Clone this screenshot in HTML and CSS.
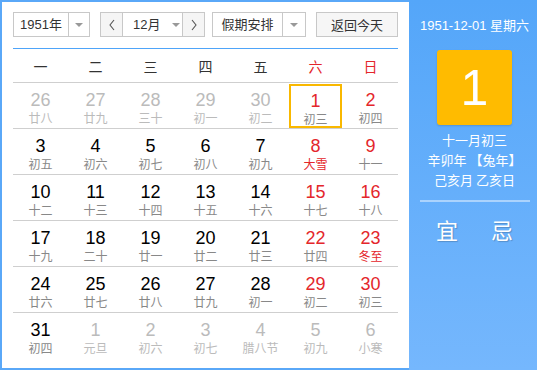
FILE: index.html
```html
<!DOCTYPE html>
<html>
<head>
<meta charset="utf-8">
<link rel="stylesheet" href="styles.css">
</head>
<body>
<div class="cal">
  <div class="main">
    <div class="toolbar">
      <div class="sel sel-year"><span class="sel-text">1951年</span><span class="sel-arrow"><i class="tri"></i></span></div>
      <div class="sel sel-month">
        <span class="nav"><svg width="8" height="12" viewBox="0 0 8 12"><path d="M6 1 L2 6 L6 11" fill="none" stroke="#555" stroke-width="1.1"/></svg></span>
        <span class="sel-text month-text"><span>12月</span><i class="tri"></i></span>
        <span class="nav"><svg width="8" height="12" viewBox="0 0 8 12"><path d="M2 1 L6 6 L2 11" fill="none" stroke="#555" stroke-width="1.1"/></svg></span>
      </div>
      <div class="sel sel-hol"><span class="sel-text">假期安排</span><span class="sel-arrow"><i class="tri"></i></span></div>
      <div class="btn-today">返回今天</div>
    </div>
    <div class="weekhead">
      <span>一</span><span>二</span><span>三</span><span>四</span><span>五</span><span class="red">六</span><span class="red">日</span>
    </div>
    <div class="grid">
      <div class="row">
        <div class="cell other"><b>26</b><em>廿八</em></div>
        <div class="cell other"><b>27</b><em>廿九</em></div>
        <div class="cell other"><b>28</b><em>三十</em></div>
        <div class="cell other"><b>29</b><em>初一</em></div>
        <div class="cell other"><b>30</b><em>初二</em></div>
        <div class="cell wkd sel-day"><b>1</b><em>初三</em></div>
        <div class="cell wkd"><b>2</b><em>初四</em></div>
      </div>
      <div class="row">
        <div class="cell"><b>3</b><em>初五</em></div>
        <div class="cell"><b>4</b><em>初六</em></div>
        <div class="cell"><b>5</b><em>初七</em></div>
        <div class="cell"><b>6</b><em>初八</em></div>
        <div class="cell"><b>7</b><em>初九</em></div>
        <div class="cell wkd"><b>8</b><em class="term">大雪</em></div>
        <div class="cell wkd"><b>9</b><em>十一</em></div>
      </div>
      <div class="row">
        <div class="cell"><b>10</b><em>十二</em></div>
        <div class="cell"><b>11</b><em>十三</em></div>
        <div class="cell"><b>12</b><em>十四</em></div>
        <div class="cell"><b>13</b><em>十五</em></div>
        <div class="cell"><b>14</b><em>十六</em></div>
        <div class="cell wkd"><b>15</b><em>十七</em></div>
        <div class="cell wkd"><b>16</b><em>十八</em></div>
      </div>
      <div class="row">
        <div class="cell"><b>17</b><em>十九</em></div>
        <div class="cell"><b>18</b><em>二十</em></div>
        <div class="cell"><b>19</b><em>廿一</em></div>
        <div class="cell"><b>20</b><em>廿二</em></div>
        <div class="cell"><b>21</b><em>廿三</em></div>
        <div class="cell wkd"><b>22</b><em>廿四</em></div>
        <div class="cell wkd"><b>23</b><em class="term">冬至</em></div>
      </div>
      <div class="row">
        <div class="cell"><b>24</b><em>廿六</em></div>
        <div class="cell"><b>25</b><em>廿七</em></div>
        <div class="cell"><b>26</b><em>廿八</em></div>
        <div class="cell"><b>27</b><em>廿九</em></div>
        <div class="cell"><b>28</b><em>初一</em></div>
        <div class="cell wkd"><b>29</b><em>初二</em></div>
        <div class="cell wkd"><b>30</b><em>初三</em></div>
      </div>
      <div class="row last">
        <div class="cell"><b>31</b><em>初四</em></div>
        <div class="cell other"><b>1</b><em>元旦</em></div>
        <div class="cell other"><b>2</b><em>初六</em></div>
        <div class="cell other"><b>3</b><em>初七</em></div>
        <div class="cell other"><b>4</b><em>腊八节</em></div>
        <div class="cell other"><b>5</b><em>初九</em></div>
        <div class="cell other"><b>6</b><em>小寒</em></div>
      </div>
    </div>
  </div>
  <div class="side">
    <div class="side-date">1951-12-01 星期六</div>
    <div class="bigday">1</div>
    <div class="lunar">十一月初三</div>
    <div class="lunar">辛卯年 【兔年】</div>
    <div class="lunar">己亥月 乙亥日</div>
    <div class="divider"></div>
    <div class="yiji"><span>宜</span><span>忌</span></div>
  </div>
</div>
</body>
</html>
```
FILE: styles.css
```css
* { box-sizing: border-box; }
html, body { margin: 0; padding: 0; }
body {
  font-family: "Liberation Sans", "Noto Sans CJK SC", sans-serif;
  width: 537px;
  height: 370px;
  overflow: hidden;
}
.cal {
  display: flex;
  width: 537px;
  height: 370px;
}
.main {
  width: 409px;
  height: 370px;
  background: #fff;
  border: 2px solid #5aa8f8;
  border-right: none;
  padding: 10px 11px 0 11px;
}
.toolbar {
  display: flex;
  height: 25px;
  font-size: 13px;
  color: #333;
  white-space: nowrap;
}
.sel {
  display: flex;
  border: 1px solid #c8c8c8;
  background: #fff;
  height: 25px;
}
.sel-year { width: 77px; }
.sel-year .sel-text { width: 54px; }
.sel-month { width: 105px; margin-left: 10px; }
.sel-hol { width: 94px; margin-left: 7px; }
.sel-hol .sel-text { width: 69px; }
.sel-text {
  display: flex;
  align-items: center;
  justify-content: center;
  height: 23px;
  line-height: 23px;
  font-family: "Liberation Sans", "Noto Sans CJK SC", sans-serif;
}
.sel-arrow {
  flex: 1;
  border-left: 1px solid #c8c8c8;
  display: flex;
  align-items: center;
  justify-content: center;
}
.tri {
  display: inline-block;
  flex: none;
  width: 0;
  height: 0;
  border-left: 4px solid transparent;
  border-right: 4px solid transparent;
  border-top: 4px solid #999;
}
.nav {
  flex: none;
  width: 22px;
  background: #f5f5f5;
  display: flex;
  align-items: center;
  justify-content: center;
}
.nav:first-child { border-right: 1px solid #c8c8c8; }
.nav:last-child { border-left: 1px solid #c8c8c8; }
.month-text {
  flex: 1;
  min-width: 0;
  justify-content: flex-start;
  padding-left: 10px;
}
.month-text span { flex: none; }
.month-text .tri { margin-left: 12px; }
.btn-today {
  width: 82px;
  margin-left: 10px;
  height: 25px;
  border: 1px solid #c8c8c8;
  background: #f6f6f6;
  display: flex;
  align-items: center;
  justify-content: center;
  font-family: "Noto Sans CJK SC", sans-serif;
  font-size: 13px;
  color: #333;
}
.weekhead {
  margin-top: 11px;
  border-top: 1px solid #4ea4f9;
  border-bottom: 1px solid #cfcfcf;
  height: 35px;
  display: grid;
  grid-template-columns: repeat(7, 1fr);
  align-items: center;
  font-family: "Noto Sans CJK SC", sans-serif;
  font-size: 14px;
  color: #333;
  text-align: center;
}
.red { color: #e4262b; }
.row {
  display: grid;
  grid-template-columns: repeat(7, 1fr);
  height: 46px;
  border-bottom: 1px solid #cfcfcf;
}
.row.last { border-bottom: none; }
.cell {
  display: flex;
  flex-direction: column;
  align-items: center;
  padding-top: 7px;
}
.cell b {
  font-weight: normal;
  font-family: "Liberation Sans", sans-serif;
  font-size: 18px;
  line-height: 20px;
  color: #000;
}
.cell em {
  font-style: normal;
  font-family: "Noto Sans CJK SC", sans-serif;
  font-size: 12px;
  line-height: 16px;
  color: #888;
}
.cell.wkd b { color: #e4262b; }
.cell em.term { color: #e4262b; }
.cell.other b { color: #bbb; }
.cell.other em { color: #bbb; }
.cell.sel-day {
  border: 2px solid #f9b800;
  margin: 1px 1px 0 1px;
  height: 44px;
  padding-top: 5px;
}
.side {
  width: 128px;
  height: 370px;
  background: linear-gradient(to bottom, #54a6f9, #75b7fd);
  color: #fff;
  display: flex;
  flex-direction: column;
  align-items: center;
  padding-left: 3px;
  font-family: "Noto Sans CJK SC", sans-serif;
}
.side-date {
  margin-top: 17px;
  font-size: 13px;
  line-height: 18px;
  font-family: "Liberation Sans", "Noto Sans CJK SC", sans-serif;
}
.bigday {
  margin-top: 15px;
  width: 75px;
  height: 75px;
  background: #ffbb00;
  border-radius: 3px;
  box-shadow: 0 1px 2px rgba(0,0,0,0.15);
  display: flex;
  align-items: center;
  justify-content: center;
  font-family: "Liberation Sans", sans-serif;
  font-size: 50px;
  color: #fff;
}
.lunar {
  font-size: 13px;
  line-height: 20px;
}
.bigday + .lunar { margin-top: 5px; }
.divider {
  margin-top: 10px;
  width: 110px;
  height: 2px;
  background: rgba(255,255,255,0.45);
}
.yiji {
  margin-top: 12px;
  display: flex;
  gap: 33px;
  font-size: 22px;
  line-height: 30px;
  text-shadow: 1px 1px 1px rgba(0,0,0,0.2);
}
```
